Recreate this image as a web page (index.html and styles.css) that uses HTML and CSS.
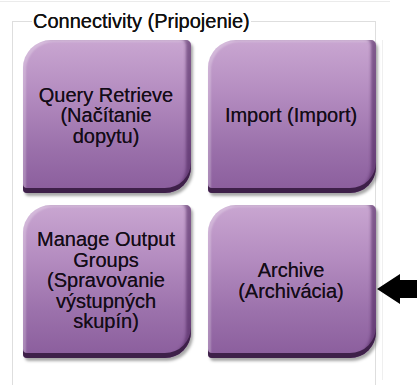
FILE: index.html
```html
<!DOCTYPE html>
<html lang="en">
<head>
  <meta charset="UTF-8">
  <title>Connectivity (Pripojenie)</title>
  <link rel="stylesheet" href="styles.css">
</head>
<body>
  <div class="top-line"></div>

  <div class="panel">
    <fieldset class="group">
      <legend>Connectivity (Pripojenie)</legend>
      <div class="tiles">
        <button class="tile">Query Retrieve<br>(Načítanie<br>dopytu)</button>
        <button class="tile">Import (Import)</button>
        <button class="tile">Manage Output<br>Groups<br>(Spravovanie<br>výstupných<br>skupín)</button>
        <button class="tile">Archive<br>(Archivácia)</button>
      </div>
    </fieldset>
    <div class="rail"></div>
  </div>

  <!-- callout arrow pointing at the Archive button -->
  <svg class="arrow" width="40" height="30" viewBox="0 0 40 30">
    <polygon points="0,15 23,0 23,6 40,6 40,24 23,24 23,30" fill="#000"/>
  </svg>
</body>
</html>
```

FILE: styles.css
```css
:root {
  --line: #dedede;
  --text: #140c17;
}

body {
  margin: 0;
  background: #fff;
  font-family: "Liberation Sans", Arial, sans-serif;
  color: var(--text);
  overflow: hidden;
  position: relative;
  height: 385px;
}

.top-line {
  margin-top: 1px;
  width: 390px;
  height: 1px;
  background: #ebebeb;
}

.panel {
  display: flex;
  align-items: flex-start;
}

.group {
  margin: 7px 0 0 12px;
  padding: 7px 0 0 10px;
  width: 364px;
  height: 376px;
  border: 1px solid var(--line);
  border-bottom: none;
  box-sizing: border-box;
  min-width: 0;
}

.group legend {
  margin-left: 9px;
  padding: 0 1px;
  font-size: 20px;
  line-height: 24px;
  color: #111;
  text-shadow: 0 0 0.4px #111;
}

.tiles {
  display: grid;
  grid-template-columns: 168px 168px;
  grid-auto-rows: 153px;
  column-gap: 17px;
  row-gap: 12px;
}

.tile {
  display: flex;
  align-items: center;
  justify-content: center;
  padding: 2px 6px 4px 4px;
  border: none;
  font-family: inherit;
  font-size: 20px;
  line-height: 20.5px;
  color: var(--text);
  text-shadow: 0 0 0.5px rgba(20, 12, 23, 0.8);
  text-align: center;
  background: linear-gradient(#c9a6d1 0%, #b48cc0 35%, #9b71ab 70%, #8a5d9c 100%);
  border-radius: 28px 5px 26px 4px;
  box-shadow:
    inset 0 -5px 0 #3e2049,
    inset -6px 0 3px -1px rgba(70, 30, 85, 0.55),
    inset 3px 2px 2px rgba(255, 255, 255, 0.25),
    2px 3px 3px rgba(0, 0, 0, 0.35);
  cursor: pointer;
}

.rail {
  margin: 38px 0 0 6px;
  width: 1px;
  height: 340px;
  background: #efefef;
}

.arrow {
  position: absolute;
  left: 377px;
  top: 274px;
}
```
